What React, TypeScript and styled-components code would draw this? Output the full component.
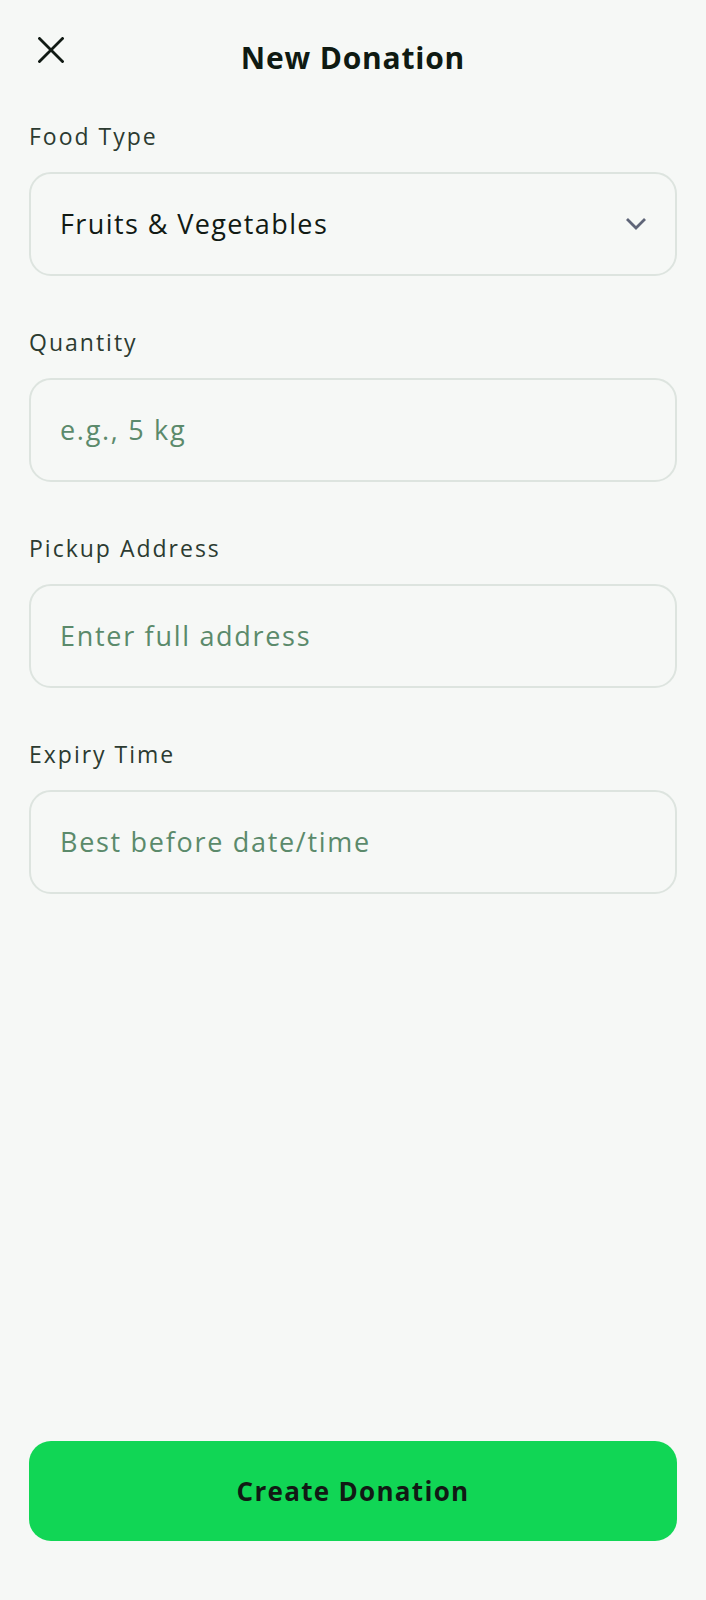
import React from "react";
import styled, { createGlobalStyle } from "styled-components";

const GlobalStyle = createGlobalStyle`
  html, body {
    margin: 0;
    padding: 0;
    background: #f6f8f6;
  }
  * { box-sizing: border-box; }
  body {
    font-family: "Open Sans", "Noto Sans", sans-serif;
    color: #111a14;
  }
`;

const Page = styled.div`
  min-height: 100vh;
  display: flex;
  flex-direction: column;
  background: #f6f8f6;
`;

const Header = styled.header`
  display: flex;
  align-items: flex-start;
  padding: 26px 29px 0;
`;

const CloseButton = styled.button`
  width: 48px;
  height: 48px;
  margin: 0;
  border: none;
  background: transparent;
  display: flex;
  align-items: center;
  justify-content: flex-start;
  padding: 0 0 0 9px;
  color: #111a14;
  cursor: pointer;
`;

const Title = styled.h1`
  flex: 1;
  margin: 14px 0 0;
  padding-right: 48px;
  text-align: center;
  font-family: "Open Sans", sans-serif;
  font-size: 30px;
  line-height: 36px;
  font-weight: 700;
  color: #0f1a12;
  letter-spacing: 0.8px;
`;

const Form = styled.form`
  flex: 1;
  display: flex;
  flex-direction: column;
  padding: 45px 29px 0;
`;

const Field = styled.label`
  display: flex;
  flex-direction: column;
  margin-bottom: 51px;
`;

const Label = styled.span`
  font-size: 23px;
  line-height: 30px;
  font-weight: 500;
  color: #2c3b31;
  letter-spacing: 2px;
  margin-bottom: 21px;
`;

const Control = styled.div`
  height: 104px;
  border: 2px solid #dde4df;
  border-radius: 22px;
  background: #f6f8f6;
  display: flex;
  align-items: center;
  padding: 0 28px 0 29px;
`;

const ValueText = styled.span<{ $placeholder?: boolean }>`
  flex: 1;
  font-size: 27px;
  line-height: 34px;
  letter-spacing: ${(p) => (p.$placeholder ? "1.7px" : "1.4px")};
  color: ${(p) => (p.$placeholder ? "#5b8a6b" : "#111a14")};
`;

const Chevron = styled.svg`
  flex: none;
  width: 22px;
  height: 14px;
  color: #5f6578;
`;

const Footer = styled.footer`
  padding: 0 29px 59px;
`;

const SubmitButton = styled.button`
  width: 100%;
  height: 100px;
  border: none;
  border-radius: 22px;
  background: #11d655;
  color: #111a14;
  font-family: "Open Sans", sans-serif;
  font-size: 26px;
  font-weight: 700;
  letter-spacing: 1.3px;
  cursor: pointer;
`;

const fields = [
  { label: "Quantity", placeholder: "e.g., 5 kg" },
  { label: "Pickup Address", placeholder: "Enter full address" },
  { label: "Expiry Time", placeholder: "Best before date/time" },
];

export default function App() {
  return (
    <>
      <GlobalStyle />
      <Page>
        <Header>
          <CloseButton type="button" aria-label="Close">
            <svg width="26" height="26" viewBox="0 0 26 26" fill="none">
              <path d="M1.5 1.5 L24.5 24.5 M24.5 1.5 L1.5 24.5" stroke="currentColor" strokeWidth="2.8" strokeLinecap="square" />
            </svg>
          </CloseButton>
          <Title>New Donation</Title>
        </Header>
        <Form onSubmit={(e) => e.preventDefault()}>
          <Field>
            <Label>Food Type</Label>
            <Control>
              <ValueText>Fruits &amp; Vegetables</ValueText>
              <Chevron viewBox="0 0 22 14" fill="none">
                <path d="M2 2 L11 11 L20 2" stroke="currentColor" strokeWidth="2.8" />
              </Chevron>
            </Control>
          </Field>
          {fields.map((f) => (
            <Field key={f.label}>
              <Label>{f.label}</Label>
              <Control>
                <ValueText $placeholder>{f.placeholder}</ValueText>
              </Control>
            </Field>
          ))}
        </Form>
        <Footer>
          <SubmitButton type="button">Create Donation</SubmitButton>
        </Footer>
      </Page>
    </>
  );
}
